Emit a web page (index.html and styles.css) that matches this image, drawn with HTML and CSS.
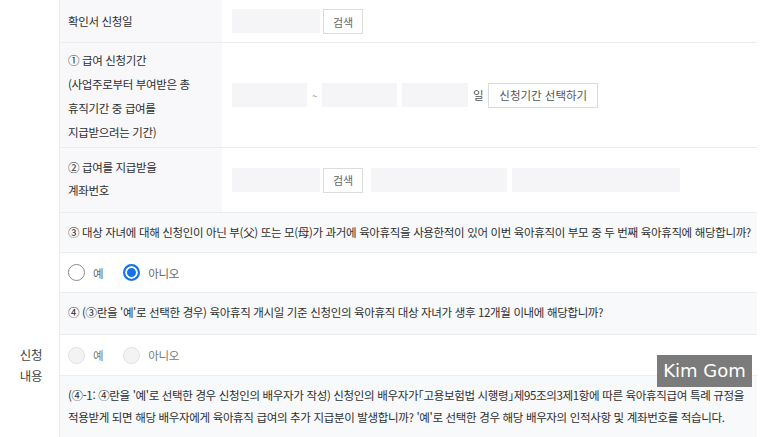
FILE: index.html
```html
<!DOCTYPE html>
<html lang="ko">
<head>
<meta charset="utf-8">
<title>신청 내용</title>
<link rel="stylesheet" href="styles.css">
</head>
<body>
<div class="page">
  <div class="side"><span class="side-label">신청<br>내용</span></div>
  <div class="table">
    <div class="row">
      <div class="th th-1">확인서 신청일</div>
      <div class="td td-1">
        <span class="field w88"></span>
        <button class="btn btn-sm">검색</button>
      </div>
    </div>
    <div class="row">
      <div class="th th-2">① 급여 신청기간<br>(사업주로부터 부여받은 총<br>휴직기간 중 급여를<br>지급받으려는 기간)</div>
      <div class="td">
        <span class="field w76"></span>
        <span class="tilde">~</span>
        <span class="field w76"></span>
        <span class="field w66"></span>
        <span class="unit">일</span>
        <button class="btn btn-lg">신청기간 선택하기</button>
      </div>
    </div>
    <div class="row">
      <div class="th th-3">② 급여를 지급받을<br>계좌번호</div>
      <div class="td">
        <span class="field w88"></span>
        <button class="btn btn-sm">검색</button>
        <span class="field w136 ml8"></span>
        <span class="field w168"></span>
      </div>
    </div>
    <div class="q q-3">③ 대상 자녀에 대해 신청인이 아닌 부(父) 또는 모(母)가 과거에 육아휴직을 사용한적이 있어 이번 육아휴직이 부모 중 두 번째 육아휴직에 해당합니까?</div>
    <div class="radios r-1">
      <label class="opt"><input type="radio" name="q3"><span>예</span></label>
      <label class="opt"><input type="radio" name="q3" checked><span>아니오</span></label>
    </div>
    <div class="q q-4">④ (③란을 '예'로 선택한 경우) 육아휴직 개시일 기준 신청인의 육아휴직 대상 자녀가 생후 12개월 이내에 해당합니까?</div>
    <div class="radios r-2">
      <label class="opt"><input type="radio" name="q4" disabled><span>예</span></label>
      <label class="opt"><input type="radio" name="q4" disabled><span>아니오</span></label>
    </div>
    <div class="q q-41">(④-1: ④란을 '예'로 선택한 경우 신청인의 배우자가 작성) 신청인의 배우자가｢고용보험법 시행령｣제95조의3제1항에 따른 육아휴직급여 특례 규정을<br>적용받게 되면 해당 배우자에게 육아휴직 급여의 추가 지급분이 발생합니까? '예'로 선택한 경우 해당 배우자의 인적사항 및 계좌번호를 적습니다.</div>
  </div>
  <div class="watermark">Kim Gom</div>
</div>
</body>
</html>
```

FILE: styles.css
```css
* { box-sizing: border-box; }
html, body { margin: 0; padding: 0; background: #fff; }
body {
  font-family: "Noto Sans CJK KR", "Noto Sans", sans-serif;
  font-size: 11.5px;
  letter-spacing: -0.35px;
  color: #2e2e2e;
  overflow: hidden;
}
.page {
  position: relative;
  display: flex;
  width: 773px;
  height: 437px;
}
.side {
  width: 59px;
  flex: none;
  display: flex;
  justify-content: center;
  padding: 344px 0 0 3px;
}
.side-label {
  font-size: 12.5px;
  line-height: 21px;
  color: #444;
  text-align: center;
}
.table {
  width: 698px;
  flex: none;
  border-left: 1px solid #ececef;
}
.row {
  display: flex;
  border-bottom: 1px solid #ececef;
}
.th {
  width: 162px;
  flex: none;
  background: #f8f8fa;
  padding: 9px 8px 9px 8px;
  line-height: 24px;
}
.th-2 { padding: 5px 8px 3px; }
.th-3 { padding: 8px 8px 10px; line-height: 23px; }
.td {
  flex: 1;
  display: flex;
  align-items: center;
  padding: 0 10px;
}
.td-1 { align-items: flex-start; padding-top: 9px; }
.field {
  display: inline-block;
  height: 24px;
  background: #f5f5f7;
  flex: none;
}
.w88 { width: 88px; }
.w76 { width: 75px; }
.w66 { width: 66px; }
.w136 { width: 136px; }
.w168 { width: 168px; }
.ml8 { margin-left: 8px; }
.w76 + .w66 { margin-left: 5px; }
.w136 + .w168 { margin-left: 5px; }
.tilde {
  width: 15px;
  text-align: center;
  color: #999;
  font-size: 10px;
}
.unit {
  margin: 0 3px 0 5px;
  color: #555;
}
.btn {
  height: 25px;
  padding: 0;
  margin: 0 0 0 3px;
  background: #fff;
  border: 1px solid #dcdcdc;
  border-radius: 0;
  font-family: inherit;
  font-size: 11px;
  letter-spacing: -0.2px;
  color: #666;
  flex: none;
}
.btn-sm { width: 40px; }
.btn-lg { width: 110px; font-size: 11.5px; letter-spacing: 0; color: #555; margin-left: 2px; }
.q {
  background: #f8f9fb;
  border-bottom: 1px solid #ececef;
  padding: 7px 8px 8px;
  line-height: 24px;
  white-space: nowrap;
}
.q-4 { padding: 7px 8px 10px; }
.q-41 { padding: 8px 8px 10px; line-height: 22px; letter-spacing: -0.34px; }
.radios {
  display: flex;
  align-items: center;
  gap: 20px;
  padding: 0 8px;
  height: 41px;
  border-bottom: 1px solid #ececef;
}
.r-1 { height: 40px; }
.opt {
  display: flex;
  align-items: center;
  gap: 8px;
  color: #666;
  font-size: 11.5px;
  letter-spacing: -0.3px;
}
.opt input {
  appearance: none;
  -webkit-appearance: none;
  margin: 0;
  width: 17px;
  height: 17px;
  border: 1px solid #8a8a8a;
  border-radius: 50%;
  background: #fff;
}
.opt input:checked {
  border: 2px solid #1673e6;
  box-shadow: inset 0 0 0 2px #fff;
  background: #1673e6;
}
.opt input:disabled {
  border-color: #e2e2e2;
  background: #f3f3f3;
}
.r-2 .opt { color: #777; }
.watermark {
  position: absolute;
  left: 657px;
  top: 355px;
  width: 95px;
  height: 32px;
  background: #7b7b7b;
  color: #fff;
  font-family: "DejaVu Sans", sans-serif;
  font-size: 18px;
  letter-spacing: 0;
  line-height: 32px;
  text-align: center;
}
```
